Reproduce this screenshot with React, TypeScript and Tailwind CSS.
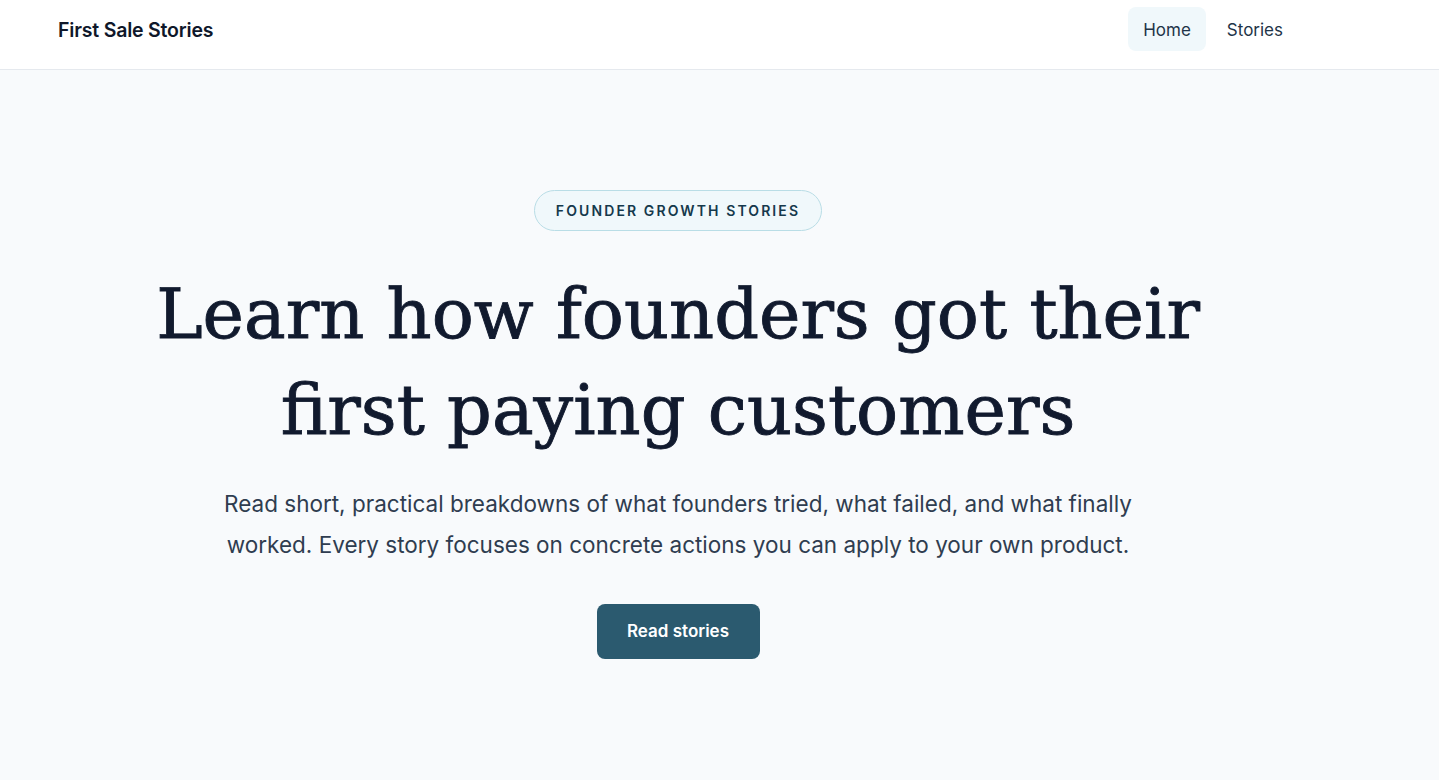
import React from 'react';

const sans = { fontFamily: 'Inter, "Noto Sans", sans-serif' };

export default function App() {
  return (
    <div className="min-h-screen bg-[#f8fafc] text-slate-900" style={sans}>
      {/* Header */}
      <header className="h-[70px] bg-white border-b border-[#e5e9ee]">
        <div className="ml-[58px] w-[1240px] pt-[7px] flex items-center justify-between">
          <a className="text-[19.5px] font-semibold text-[#0f172a] tracking-[-0.01em] pt-[3px]">First Sale Stories</a>
          <nav className="flex items-center gap-[6px]">
            <a className="px-[15px] h-[44px] pt-[3px] flex items-center rounded-lg bg-[#f0f8fb] text-[17px] text-[#1e3448]">Home</a>
            <a className="px-[15px] h-[44px] pt-[3px] flex items-center rounded-lg text-[17px] text-[#1e3448]">Stories</a>
          </nav>
        </div>
      </header>

      {/* Hero */}
      <main className="ml-[58px] w-[1240px] flex flex-col items-center text-center pt-[120px] pb-[120px]">
        <span className="inline-flex items-center h-[41px] px-[21px] rounded-full border border-[#b9dde6] bg-[#f0f8fb] text-[14px] font-semibold tracking-[0.15em] text-[#15394c]">
          FOUNDER GROWTH STORIES
        </span>

        <h1
          className="mt-[35px] max-w-[1100px] text-[70px] leading-[96px] font-normal text-[#111a2e] [-webkit-text-stroke:0.9px_#111a2e]"
          style={{ fontFamily: '"DejaVu Serif", serif' }}
        >
          Learn how founders got their first paying customers
        </h1>

        <p className="mt-[25px] max-w-[940px] text-[22.5px] leading-[41px] text-[#2f3d50]">
          Read short, practical breakdowns of what founders tried, what failed, and what finally worked. Every story focuses on concrete actions you can apply to your own product.
        </p>

        <a className="mt-[39px] inline-flex items-center justify-center w-[163px] h-[55px] rounded-lg bg-[#2b5a6f] text-white text-[17px] font-semibold">
          Read stories
        </a>
      </main>
    </div>
  );
}
